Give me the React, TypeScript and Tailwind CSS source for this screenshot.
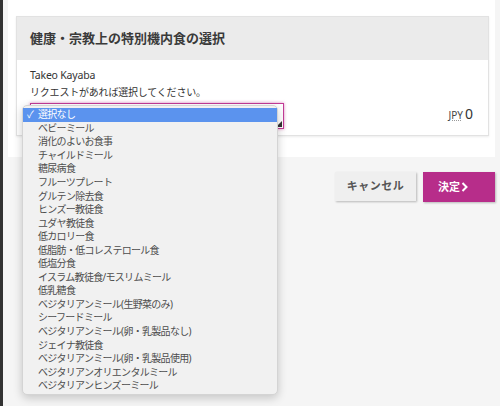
import React from 'react';

const meals = [
    '選択なし',
    'ベビーミール',
    '消化のよいお食事',
    'チャイルドミール',
    '糖尿病食',
    'フルーツプレート',
    'グルテン除去食',
    'ヒンズー教徒食',
    'ユダヤ教徒食',
    '低カロリー食',
    '低脂肪・低コレステロール食',
    '低塩分食',
    'イスラム教徒食/モスリムミール',
    '低乳糖食',
    'ベジタリアンミール(生野菜のみ)',
    'シーフードミール',
    'ベジタリアンミール(卵・乳製品なし)',
    'ジェイナ教徒食',
    'ベジタリアンミール(卵・乳製品使用)',
    'ベジタリアンオリエンタルミール',
    'ベジタリアンヒンズーミール',
];

const font = { fontFamily: '"Noto Sans", "Noto Sans CJK JP", sans-serif' };

const App: React.FC = () => {
    return (
        <div style={font} className="relative flex w-[500px] h-[406px] overflow-hidden bg-[#f5f5f5] text-[#333]">
            <div className="w-[3px] bg-[#333]" />
            <div className="pl-[5px]">
                <div className="w-[487px] bg-white pl-2 pr-[6px] pt-4 pb-[21px]">
                    {/* meal card */}
                    <div className="border border-[#e2e2e2] shadow-[0_1px_2px_rgba(0,0,0,0.08)]">
                        <div className="h-[43px] bg-[#ebebeb] flex items-center px-[13px]">
                            <h2 className="text-[13px] font-bold text-[#3a3a3a]">健康・宗教上の特別機内食の選択</h2>
                        </div>
                        <div className="bg-white px-[13px] pt-2 pb-[6px]">
                            <div className="text-[10.5px] leading-[14px] tracking-[-0.2px] text-[#333]">Takeo Kayaba</div>
                            <div className="mt-[3px] text-[10px] leading-[14px] tracking-[-0.2px] text-[#333]">リクエストがあれば選択してください。</div>
                            <div className="mt-1 flex items-end justify-between">
                                <div className="relative w-[254px] h-[26px] border border-[#c23b96] shadow-[0_0_3px_rgba(200,60,150,0.6)] bg-white">
                                    <svg className="absolute right-[1px] bottom-[1px]" width="6" height="6" viewBox="0 0 6 6">
                                        <path d="M6 0 L6 6 L0 6 Z" fill="#333" />
                                    </svg>
                                </div>
                                <div className="flex items-baseline gap-[2px] pb-[5px] pr-[2px]">
                                    <span className="text-[10px] text-[#444] underline decoration-dotted decoration-[#999]">JPY</span>
                                    <span className="text-[14px] text-[#333]">0</span>
                                </div>
                            </div>
                        </div>
                    </div>
                </div>
                <div className="mt-[15px] flex justify-end gap-[7px]">
                    <button className="w-[81px] h-[29px] bg-[#efefef] shadow-[1px_1px_2px_rgba(0,0,0,0.25)] text-[11px] font-bold text-[#555] tracking-[0.5px]">キャンセル</button>
                    <button className="w-[72px] h-[30px] bg-[#b72d8a] shadow-[1px_1px_2px_rgba(0,0,0,0.25)] text-[11px] font-bold text-white flex items-center pl-[15px] gap-[1px]">
                        決定
                        <svg width="7" height="10" viewBox="0 0 7 10">
                            <path d="M1.5 1 L5.5 5 L1.5 9" fill="none" stroke="white" strokeWidth="2" />
                        </svg>
                    </button>
                </div>
            </div>

            {/* open select popup */}
            <div className="absolute left-[22px] top-[105px] w-[256px] h-[290px] rounded-[5px] bg-[#f1f1f1] border border-[#d4d4d4] shadow-[0_3px_10px_rgba(0,0,0,0.2)] pt-[2px]">
                {meals.map((m, i) => (
                    <div
                        key={m}
                        className={`flex items-center h-[13.55px] text-[10px] tracking-[-0.7px] ${i === 0 ? 'bg-[#5b93ee] text-white' : 'text-[#4d4d4d]'}`}
                    >
                        <span className="w-[15px] pl-[4px] text-[10px]">{i === 0 ? '✓' : ''}</span>
                        <span>{m}</span>
                    </div>
                ))}
            </div>
        </div>
    );
};

export default App;
